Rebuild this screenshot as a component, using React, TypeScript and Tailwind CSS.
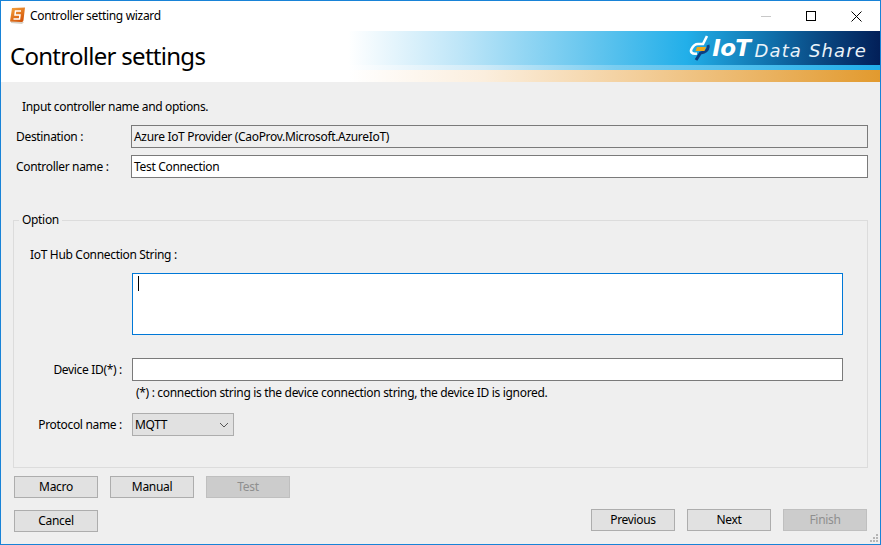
import React from "react";

const font = { fontFamily: '"Noto Sans", "Open Sans", sans-serif' };

function Btn({ label, disabled }: { label: string; disabled?: boolean }) {
  return (
    <div
      className={
        "w-[84px] h-[22px] border flex items-center justify-center text-[12px] leading-none " +
        (disabled ? "bg-[#cccccc] border-[#bfbfbf] text-[#8f8f8f]" : "bg-[#e1e1e1] border-[#adadad] text-black")
      }
    >
      {label}
    </div>
  );
}

function Logo() {
  return (
    <svg width="22" height="26" viewBox="0 0 22 26" className="shrink-0">
      <path d="M18 1 L14 9 L9 9 C6 9 4 11 2.5 14 C1 17 3 19.5 8 18.5" fill="none" stroke="#ffffff" strokeWidth="2.6" />
      <path d="M19 10 C20 13 18 16 15 17 L11.5 18 L7 25" fill="none" stroke="#0d3f80" strokeWidth="3" />
      <path d="M8 12 L17 12 L15.5 16 L6.5 16 Z" fill="#f0a818" />
    </svg>
  );
}

export default function App() {
  return (
    <div
      className="w-[881px] h-[545px] border border-[#1883d7] bg-[#efefef] flex flex-col overflow-hidden relative text-black text-[12px] tracking-[-0.32px]"
      style={font}
    >
      {/* Title bar */}
      <div className="h-[30px] bg-white flex items-center shrink-0">
        <svg width="18" height="20" viewBox="0 0 18 20" className="ml-[8px] shrink-0">
          <defs>
            <linearGradient id="ic" x1="0" y1="0" x2="0.6" y2="1">
              <stop offset="0" stopColor="#f6a640" />
              <stop offset="1" stopColor="#d4560a" />
            </linearGradient>
          </defs>
          <path d="M2 17 L13 18 L15 16 L2 15 Z" fill="#d6cfc4" />
          <path d="M3 2 L16 1.5 L14.5 14 C14.4 15.5 13.5 16 12.5 16 L1 15.5 Z" fill="url(#ic)" />
          <path d="M12 5 L6.5 5 L6 9 L11 9 L10.5 13 L4.5 13" fill="none" stroke="#ffffff" strokeWidth="1.5" />
        </svg>
        <span className="ml-[3px] text-[12px] mt-[-1px]">Controller setting wizard</span>
        <div className="ml-auto flex items-center">
          <div className="w-[10px] h-px bg-[#c8c8c8] mr-[35px]" />
          <div className="w-[10px] h-[10px] border border-black mr-[35px]" />
          <svg width="11" height="11" viewBox="0 0 11 11" className="mr-[18px]">
            <path d="M0.5 0.5 L10.5 10.5 M10.5 0.5 L0.5 10.5" stroke="#000" strokeWidth="1" />
          </svg>
        </div>
      </div>

      {/* Banner */}
      <div className="h-[51px] shrink-0 bg-white flex flex-col relative">
        <div className="h-[34px] bg-[linear-gradient(90deg,#ffffff_39.5%,#bfe6f8_52%,#6cc8ef_66%,#22afe9_78%,#0f6da8_88%,#0a4a84_93%,#021f58_100%)] flex items-center justify-end pr-[13px]">
          <Logo />
          <span
            className="ml-[1px] text-white italic font-bold text-[23px] leading-none tracking-[-0.6px]"
            style={{ fontFamily: '"DejaVu Sans", sans-serif' }}
          >
            IoT
          </span>
          <span
            className="ml-[4px] mt-[6px] text-[#eaf3fa] italic text-[18px] leading-none tracking-[1.15px]"
            style={{ fontFamily: '"DejaVu Sans", sans-serif' }}
          >
            Data Share
          </span>
        </div>
        <div className="h-[5px] bg-[linear-gradient(90deg,#ffffff_39.5%,#cdeaf8_55%,#79cdf0_70%,#20ade8_100%)]" />
        <div className="h-[12px] bg-[linear-gradient(90deg,#ffffff_39.5%,#fbeedd_55%,#f3cf9c_72%,#e29a2e_100%)]" />
        <div className="absolute left-[9px] top-[9px] text-[24px] leading-[32px] tracking-[-0.72px] text-black">
          Controller settings
        </div>
      </div>

      {/* Body */}
      <div className="flex-1 flex flex-col pl-[12px] pr-[12px]">
        <div className="h-[24px] pl-[9px] mt-[13px] flex items-center">Input controller name and options.</div>

        <div className="flex items-center h-[23px] mt-[6px]">
          <div className="w-[118px] pl-[3px]">Destination :</div>
          <div className="flex-1 h-[23px] bg-[#efefef] border border-[#7a7a7a] pl-[2px] flex items-center">
            Azure IoT Provider (CaoProv.Microsoft.AzureIoT)
          </div>
        </div>
        <div className="flex items-center h-[23px] mt-[7px]">
          <div className="w-[118px] pl-[3px]">Controller name :</div>
          <div className="flex-1 h-[23px] bg-white border border-[#7a7a7a] pl-[2px] flex items-center">
            Test Connection
          </div>
        </div>

        {/* Option group */}
        <div className="relative h-[248px] mt-[42px] border border-[#dcdcdc] pl-[16px] flex flex-col">
          <div className="absolute left-[5px] top-[-9px] bg-[#efefef] px-[3px] leading-[16px]">Option</div>
          <div className="h-[16px] mt-[26px] leading-[16px]">IoT Hub Connection String :</div>

          <div className="ml-[102px] w-[711px] h-[62px] mt-[10px] bg-white border border-[#0078d7] pl-[5px] pt-[2px]">
            <div className="w-px h-[15px] bg-black" />
          </div>

          <div className="flex items-center h-[23px] mt-[23px]">
            <div className="w-[92px] text-right">Device ID(*) :</div>
            <div className="ml-[10px] w-[711px] h-[23px] bg-white border border-[#7a7a7a]" />
          </div>

          <div className="ml-[106px] h-[16px] mt-[4px] leading-[16px]">
            (*) : connection string is the device connection string, the device ID is ignored.
          </div>

          <div className="flex items-center h-[23px] mt-[12px]">
            <div className="w-[92px] text-right">Protocol name :</div>
            <div className="ml-[10px] w-[102px] h-[23px] bg-[#e1e1e1] border border-[#adadad] flex items-center pl-[2px]">
              MQTT
              <svg width="10" height="6" viewBox="0 0 10 6" className="ml-auto mr-[4px]">
                <path d="M1 1 L5 5 L9 1" fill="none" stroke="#555" strokeWidth="1" />
              </svg>
            </div>
          </div>
        </div>

        {/* Button rows */}
        <div className="flex gap-[12px] mt-[8px] ml-[1px]">
          <Btn label="Macro" />
          <Btn label="Manual" />
          <Btn label="Test" disabled />
        </div>
        <div className="flex mt-[12px] ml-[1px] items-start">
          <Btn label="Cancel" />
          <div className="ml-auto flex gap-[12px] mt-[-1px] mr-[1px]">
            <Btn label="Previous" />
            <Btn label="Next" />
            <Btn label="Finish" disabled />
          </div>
        </div>
      </div>

      {/* Resize grip */}
      <svg width="9" height="9" viewBox="0 0 9 9" className="absolute right-[1px] bottom-[1px]">
        <g fill="#b5b5b5">
          <rect x="6" y="0" width="2" height="2" />
          <rect x="3" y="3" width="2" height="2" />
          <rect x="6" y="3" width="2" height="2" />
          <rect x="0" y="6" width="2" height="2" />
          <rect x="3" y="6" width="2" height="2" />
          <rect x="6" y="6" width="2" height="2" />
        </g>
      </svg>
    </div>
  );
}
